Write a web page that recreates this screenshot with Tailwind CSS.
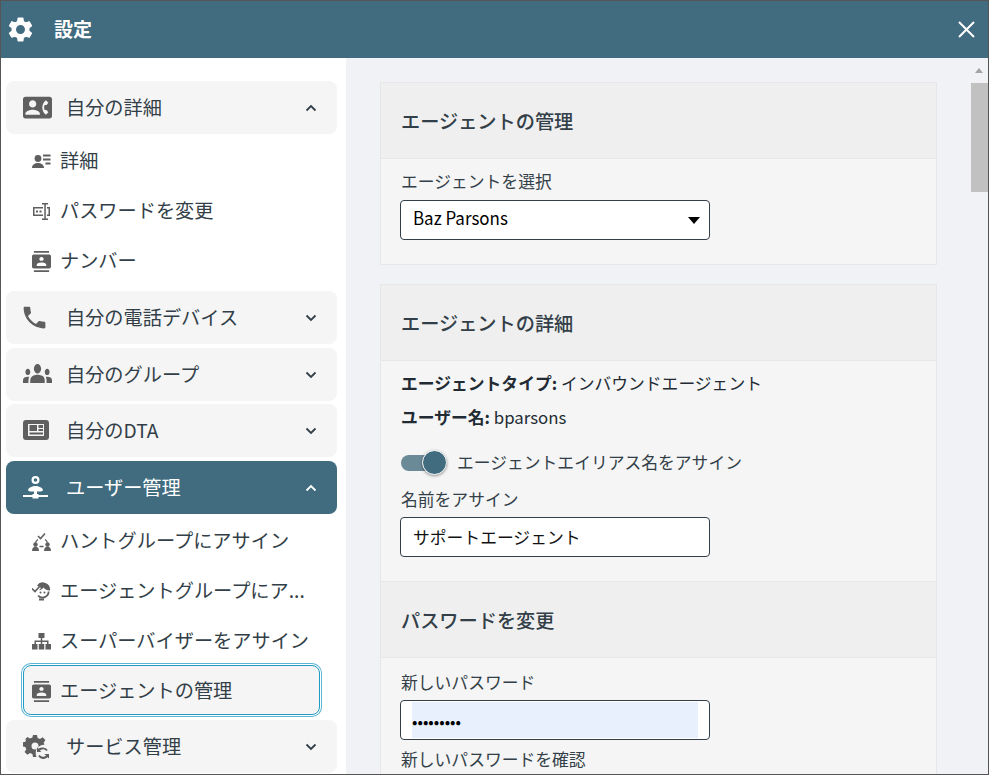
<!DOCTYPE html>
<html lang="ja">

<head>
    <meta charset="UTF-8">
    <title>設定</title>
    <script src="https://cdn.jsdelivr.net/npm/@tailwindcss/browser@4"></script>
</head>

<body class="overflow-hidden">
    <div class="w-[989px] h-[775px] border border-[#555] flex flex-col overflow-hidden bg-white font-['Noto_Sans_CJK_JP','Noto_Sans',sans-serif] text-[#333f48]">
        <!-- Header -->
        <header class="h-[57px] shrink-0 bg-[#416b7e] flex items-center justify-between pl-[7px] pr-[13px] text-white">
            <div class="flex items-center">
                <svg class="w-[25px] h-[25px]" viewBox="2.5 2 19 20" fill="#fff"><path d="M19.14 12.94c.04-.3.06-.61.06-.94 0-.32-.02-.64-.07-.94l2.03-1.58c.18-.14.23-.41.12-.61l-1.92-3.32c-.12-.22-.37-.29-.59-.22l-2.39.96c-.5-.38-1.03-.7-1.62-.94l-.36-2.54c-.04-.24-.24-.41-.48-.41h-3.84c-.24 0-.43.17-.47.41l-.36 2.54c-.59.24-1.13.57-1.62.94l-2.39-.96c-.22-.08-.47 0-.59.22L2.74 8.87c-.12.21-.08.47.12.61l2.03 1.58c-.05.3-.09.63-.09.94s.02.64.07.94l-2.03 1.58c-.18.14-.23.41-.12.61l1.92 3.32c.12.22.37.29.59.22l2.39-.96c.5.38 1.03.7 1.62.94l.36 2.54c.05.24.24.41.48.41h3.84c.24 0 .44-.17.47-.41l.36-2.54c.59-.24 1.13-.56 1.62-.94l2.39.96c.22.08.47 0 .59-.22l1.92-3.32c.12-.22.07-.47-.12-.61l-2.01-1.58zM12 15.6c-1.98 0-3.6-1.62-3.6-3.6s1.62-3.6 3.6-3.6 3.6 1.62 3.6 3.6-1.62 3.6-3.6 3.6z"/></svg>
                <span class="ml-[21px] text-[19px] font-bold">設定</span>
            </div>
            <svg class="w-[17px] h-[17px]" viewBox="0 0 17 17" stroke="#fff" stroke-width="2" fill="none"><path d="M1 1l15 15M16 1L1 16"/></svg>
        </header>

        <div class="flex flex-1 min-h-0">
            <!-- Sidebar -->
            <nav class="w-[345px] shrink-0 pl-[5px] pr-[9px] pt-[23px] flex flex-col text-[19.2px] leading-[28px]">
                <div class="h-[53px] shrink-0 rounded-lg bg-[#f5f5f5] flex items-center pl-[17px] pr-[20px]">
                    <svg class="w-[29px] h-[29px] shrink-0" viewBox="0 0 24 24" fill="#5f5f5f"><path d="M22 3H2C.9 3 0 3.9 0 5v14c0 1.1.9 2 2 2h20c1.1 0 1.99-.9 1.99-2L24 5c0-1.1-.9-2-2-2zM8 6c1.66 0 3 1.34 3 3s-1.34 3-3 3-3-1.34-3-3 1.34-3 3-3zm6 12H2v-1c0-2 4-3.1 6-3.1s6 1.1 6 3.1v1zm3.85-4h1.64L21 16l-1.99 1.99c-1.31-.98-2.28-2.38-2.73-3.99-.18-.64-.28-1.31-.28-2s.1-1.36.28-2c.45-1.62 1.42-3.01 2.73-3.99L21 8l-1.51 2h-1.64c-.22.63-.35 1.3-.35 2s.13 1.37.35 2z"/></svg>
                    <span class="ml-[14px] mb-[2px] flex-1">自分の詳細</span>
                    <svg class="w-[12px] h-[8px]" viewBox="0 0 12 8" fill="none" stroke="#333f48" stroke-width="1.8"><path d="M1.500 6.500L6 2l4.500 4.500"/></svg>
                </div>

                <div class="h-[50px] shrink-0 mt-[2px] flex items-center pl-[26px]">
                    <svg class="w-[19px] h-[19px] shrink-0" viewBox="0 0 19 19" fill="#5f5f5f"><circle cx="6" cy="6.500" r="3.400"/><path d="M0 16c0-3.500 3-5 6-5s6 1.500 6 5zM11 2.500h7.500v2H11zM11 6.500h7.500v2H11zM13.500 10.500h5v2h-5z"/></svg>
                    <span class="ml-[9px] mb-[2px]">詳細</span>
                </div>
                <div class="h-[50px] shrink-0 flex items-center pl-[26px]">
                    <svg class="w-[19px] h-[19px] shrink-0" viewBox="0 0 19 19" fill="#5f5f5f"><path d="M1 5h10v1.500H2.500v6H11V14H1zM10 1h6v1.500h-2.200v14H16V18h-6v-1.500h2.300v-14H10zM15 5h3v9h-3v-1.500h1.500v-6H15z"/><rect x="4" y="8.500" width="2" height="2"/><rect x="7.500" y="8.500" width="2" height="2"/></svg>
                    <span class="ml-[9px] mb-[2px]">パスワードを変更</span>
                </div>
                <div class="h-[50px] shrink-0 flex items-center pl-[26px]">
                    <svg class="w-[19px] h-[21px] shrink-0" viewBox="2 0 20 24" preserveAspectRatio="none" fill="#5f5f5f"><path d="M20 0H4v2h16V0zM4 24h16v-2H4v2zM20 4H4c-1.100 0-2 .9-2 2v12c0 1.100.9 2 2 2h16c1.100 0 2-.9 2-2V6c0-1.100-.9-2-2-2zm-8 2.750c1.240 0 2.250 1.010 2.250 2.250s-1.010 2.250-2.250 2.250S9.750 10.240 9.750 9 10.760 6.750 12 6.750zM17 17H7v-1.500c0-1.670 3.330-2.500 5-2.500s5 .83 5 2.500V17z"/></svg>
                    <span class="ml-[9px] mb-[2px]">ナンバー</span>
                </div>

                <div class="h-[53px] shrink-0 mt-[5px] rounded-lg bg-[#f5f5f5] flex items-center pl-[14px] pr-[20px]">
                    <svg class="w-[29px] h-[29px] shrink-0" viewBox="0 0 24 24" fill="#5f5f5f"><path d="M6.620 10.790c1.440 2.830 3.760 5.140 6.590 6.590l2.200-2.200c.27-.27.67-.36 1.020-.24 1.120.37 2.330.57 3.570.57.55 0 1 .45 1 1V20c0 .55-.45 1-1 1-9.390 0-17-7.610-17-17 0-.55.45-1 1-1h3.500c.55 0 1 .45 1 1 0 1.250.2 2.450.57 3.570.11.35.03.74-.25 1.020l-2.200 2.200z"/></svg>
                    <span class="ml-[17px] mb-[2px] flex-1">自分の電話デバイス</span>
                    <svg class="w-[12px] h-[8px]" viewBox="0 0 12 8" fill="none" stroke="#333f48" stroke-width="1.800"><path d="M1.500 1.500L6 6l4.500-4.500"/></svg>
                </div>
                <div class="h-[53px] shrink-0 mt-[4px] rounded-lg bg-[#f5f5f5] flex items-center pl-[17px] pr-[20px]">
                    <svg class="w-[29px] h-[19px] mb-[2px] shrink-0" viewBox="0 6 24 12" preserveAspectRatio="none" fill="#5f5f5f"><path d="M12 12.750c1.630 0 3.070.39 4.240.9 1.080.48 1.760 1.560 1.760 2.730V18H6v-1.610c0-1.180.68-2.260 1.760-2.730 1.170-.52 2.610-.91 4.240-.91zM4 13c1.100 0 2-.9 2-2s-.9-2-2-2-2 .9-2 2 .9 2 2 2zm1.130 1.100c-.37-.06-.74-.1-1.130-.1-.99 0-1.930.21-2.780.58C.48 14.900 0 15.620 0 16.430V18h4.500v-1.610c0-.83.23-1.610.63-2.290zM20 13c1.100 0 2-.9 2-2s-.9-2-2-2-2 .9-2 2 .9 2 2 2zm4 3.430c0-.81-.48-1.530-1.220-1.850-.85-.37-1.790-.58-2.780-.58-.39 0-.76.04-1.130.1.4.68.63 1.460.63 2.290V18H24v-1.570zM12 6c1.660 0 3 1.340 3 3s-1.340 3-3 3-3-1.340-3-3 1.340-3 3-3z"/></svg>
                    <span class="ml-[14px] mb-[2px] flex-1">自分のグループ</span>
                    <svg class="w-[12px] h-[8px]" viewBox="0 0 12 8" fill="none" stroke="#333f48" stroke-width="1.800"><path d="M1.500 1.500L6 6l4.500-4.500"/></svg>
                </div>
                <div class="h-[53px] shrink-0 mt-[3px] rounded-lg bg-[#f5f5f5] flex items-center pl-[17px] pr-[20px]">
                    <svg class="w-[26px] h-[20px] mr-[3px] mb-[2px] shrink-0" viewBox="0 0 26 20" fill="#5f5f5f"><path fill-rule="evenodd" d="M3 0h20a3 3 0 0 1 3 3v14a3 3 0 0 1-3 3H3a3 3 0 0 1-3-3V3a3 3 0 0 1 3-3zM5 4v12h16V4z"/><path d="M6.500 5h7.500v6h-7.500zM15.500 5h4.500v3h-4.500zM15.500 9h4.500v2h-4.500zM6.500 12.500h13.500v2H6.500z"/></svg>
                    <span class="ml-[14px] mb-[2px] flex-1">自分のDTA</span>
                    <svg class="w-[12px] h-[8px]" viewBox="0 0 12 8" fill="none" stroke="#333f48" stroke-width="1.800"><path d="M1.500 1.500L6 6l4.500-4.500"/></svg>
                </div>
                <div class="h-[53px] shrink-0 mt-[4px] rounded-lg bg-[#416b7e] text-white flex items-center pl-[17px] pr-[20px]">
                    <svg class="w-[25px] h-[25px] shrink-0" viewBox="0 0 25 25" fill="#fff"><path fill-rule="evenodd" d="M12.500 1a4 4 0 1 1 0 8 4 4 0 0 1 0-8zm0 2.200a1.800 1.800 0 1 0 0 3.600 1.800 1.800 0 0 0 0-3.600z"/><path d="M5 15.500c0-2.800 4.500-4.500 7.500-4.500s7.500 1.700 7.500 4.500l-2 1H7zM0 20h25v2H0zM11 16h3v4h-3zM9.500 19h6v4.500h-6z"/></svg>
                    <span class="ml-[18px] mb-[2px] flex-1">ユーザー管理</span>
                    <svg class="w-[12px] h-[8px]" viewBox="0 0 12 8" fill="none" stroke="#fff" stroke-width="1.800"><path d="M1.500 6.500L6 2l4.500 4.500"/></svg>
                </div>

                <div class="h-[50px] shrink-0 mt-[2px] flex items-center pl-[26px]">
                    <svg class="w-[19px] h-[19px] shrink-0" viewBox="0 0 19 19" fill="#5f5f5f"><path d="M6 7.500a6 6 0 0 0-2.500 3M13 7.500a6 6 0 0 1 2.500 3M7.500 14.500h4" fill="none" stroke="#5f5f5f" stroke-width="1.300"/><circle cx="3.500" cy="12.500" r="2.200"/><circle cx="15.500" cy="12.500" r="2.200"/><path d="M0 19c0-3 1.500-4.500 3.500-4.500S7 16 7 19zM12 19c0-3 1.500-4.500 3.500-4.500S19 16 19 19z"/><path d="M6 4l2.500 2.500L13 1.500" fill="none" stroke="#5f5f5f" stroke-width="1.600"/></svg>
                    <span class="ml-[9px] mb-[2px]">ハントグループにアサイン</span>
                </div>
                <div class="h-[50px] shrink-0 flex items-center pl-[26px]">
                    <svg class="w-[19px] h-[19px] shrink-0" viewBox="0 0 19 19" fill="#5f5f5f"><path d="M5 3.500A7.200 7.200 0 0 1 18 8.500c-3 0-5-1-6.500-3-1 1.500-2.500 2.500-4.500 2.800L9 6z"/><path fill-rule="evenodd" d="M17.500 9.500a7 7 0 0 1-12 4.800l1.300-1.200a5.200 5.200 0 0 0 8.900-3.600z"/><circle cx="8.500" cy="10.500" r="1"/><circle cx="12.500" cy="10.500" r="1"/><path d="M7 16.500h5v2H7z"/><path d="M0 6.500L3 9.500 7.500 4.500" fill="none" stroke="#5f5f5f" stroke-width="1.600"/></svg>
                    <span class="ml-[9px] mb-[2px] w-[248px] whitespace-nowrap">エージェントグループにア...</span>
                </div>
                <div class="h-[50px] shrink-0 flex items-center pl-[26px]">
                    <svg class="w-[19px] h-[19px] shrink-0" viewBox="0 0 19 19" fill="#5f5f5f"><path d="M6.500 1h6v5h-6zM8.750 6h1.500v3h-1.500zM2.500 8.500h14V12H15v-2H4v2H2.500zM8.750 9h1.500v3h-1.500z"/><path d="M0 12h5.500v5.500H0zM6.750 12h5.500v5.500h-5.500zM13.500 12H19v5.500h-5.500z"/></svg>
                    <span class="ml-[9px] mb-[2px]">スーパーバイザーをアサイン</span>
                </div>
                <!-- focused row -->
                <div class="h-[50px] w-[297px] ml-[17px] shrink-0 -mt-px rounded-lg bg-[#f5f5f5] border border-[#1f9bc4] ring-1 ring-offset-1 ring-[#5db4d3] flex items-center pl-[8px]">
                    <svg class="w-[19px] h-[21px] mt-[2px] shrink-0" viewBox="2 0 20 24" preserveAspectRatio="none" fill="#5f5f5f"><path d="M20 0H4v2h16V0zM4 24h16v-2H4v2zM20 4H4c-1.100 0-2 .9-2 2v12c0 1.100.9 2 2 2h16c1.100 0 2-.9 2-2V6c0-1.100-.9-2-2-2zm-8 2.750c1.240 0 2.250 1.010 2.250 2.250s-1.010 2.250-2.250 2.250S9.750 10.240 9.750 9 10.760 6.750 12 6.750zM17 17H7v-1.500c0-1.670 3.330-2.500 5-2.500s5 .83 5 2.500V17z"/></svg>
                    <span class="ml-[9px]">エージェントの管理</span>
                </div>
                <div class="h-[53px] shrink-0 mt-[5px] rounded-lg bg-[#f5f5f5] flex items-center pl-[17px] pr-[20px]">
                    <svg class="w-[26px] h-[26px] shrink-0" viewBox="0 0 26 26" fill="#5f5f5f"><path fill-rule="evenodd" d="M10 1h4l.6 3 2.400 1 2.600-1.700 2.800 2.800L20.700 8.700l.8 2.100c-4.500-.5-9 3.500-8.800 8.500 0 1.300.3 2.500.8 3.700H10l-.6-3-2.400-1-2.600 1.700-2.800-2.800 1.700-2.600-1-2.400-3-.6v-4l3-.6 1-2.400L1.600 5.700l2.800-2.800L7 4.600 9.400 3.600zM12 8.500a3.500 3.500 0 1 0 0 7 3.500 3.500 0 0 0 0-7z"/><path d="M20 13.500a5.800 5.800 0 0 1 4.800 2.600l-1.500 1a4 4 0 0 0-6.500-.3l1.700 1.200H14v-4.500l1.500 1.300a5.800 5.800 0 0 1 4.500-1.300zM26 20v4.500l-1.500-1.300a5.800 5.800 0 0 1-9.300-1.300l1.500-1a4 4 0 0 0 6.500.3L21 20z"/></svg>
                    <span class="ml-[17px] mb-[2px] flex-1">サービス管理</span>
                    <svg class="w-[12px] h-[8px]" viewBox="0 0 12 8" fill="none" stroke="#333f48" stroke-width="1.800"><path d="M1.500 1.500L6 6l4.500-4.500"/></svg>
                </div>
            </nav>

            <!-- Main -->
            <main class="relative flex-1 min-w-0 bg-[#f0f2f5] overflow-hidden pl-[34px] pt-[24px] text-[16.8px] leading-[24px]">
                <section class="w-[557px] border border-[#e7e7e7] bg-[#f5f5f5]">
                    <h2 class="h-[76px] flex items-center px-[20px] bg-[#efefef] border-b border-[#e7e7e7] text-[19.2px] font-medium">エージェントの管理</h2>
                    <div class="px-[20px] pt-[10px] pb-[24px]">
                        <label class="block">エージェントを選択</label>
                        <div class="mt-[7px] -ml-px w-[310px] h-[40px] bg-white border border-[#333f48] rounded-[4px] flex items-center justify-between pl-[12px] pr-[9px] text-black text-[18px]">
                            <span class="origin-left scale-x-[0.94] mb-[7px]">Baz Parsons</span>
                            <span class="w-0 h-0 border-x-[6px] border-x-transparent border-t-[7px] border-t-black"></span>
                        </div>
                    </div>
                </section>

                <section class="w-[557px] mt-[19px] border border-[#e7e7e7] bg-[#f5f5f5]">
                    <h2 class="h-[76px] flex items-center px-[20px] bg-[#efefef] border-b border-[#e7e7e7] text-[19.2px] font-medium">エージェントの詳細</h2>
                    <div class="px-[20px] pt-[10px] pb-[24px]">
                        <p class="text-[#222b33]"><b>エージェントタイプ:</b> インバウンドエージェント</p>
                        <p class="mt-[10px] text-[#222b33]"><b>ユーザー名:</b> bparsons</p>
                        <div class="mt-[19px] flex items-center h-[28px]">
                            <span class="relative w-[46px] h-[16px] rounded-full bg-[#6b8a98] shrink-0 mt-[1px]">
                                <span class="absolute right-0 -top-[5px] w-[25px] h-[25px] rounded-full bg-[#416b7e] border border-white shadow-[0_1px_3px_rgba(0,0,0,0.4)]"></span>
                            </span>
                            <span class="ml-[10px]">エージェントエイリアス名をアサイン</span>
                        </div>
                        <label class="block mt-[11px]">名前をアサイン</label>
                        <div class="mt-[6px] -ml-px w-[310px] h-[40px] bg-white border border-[#333f48] rounded-[4px] flex items-center pl-[12px] text-[#111]">サポートエージェント</div>
                    </div>
                    <h2 class="h-[77px] flex items-center px-[20px] bg-[#efefef] border-y border-[#e7e7e7] text-[19.2px] font-medium">パスワードを変更</h2>
                    <div class="px-[20px] pt-[12px] pb-[20px]">
                        <label class="block">新しいパスワード</label>
                        <div class="mt-[6px] -ml-px w-[310px] h-[40px] bg-white border border-[#333f48] rounded-[4px] px-[11px] py-[1px]">
                            <div class="h-full bg-[#e8f0fe] flex items-center pt-[2px] text-black text-[16px]">•••••••••</div>
                        </div>
                        <label class="block mt-[7px]">新しいパスワードを確認</label>
                    </div>
                </section>

                <!-- scrollbar -->
                <div class="absolute right-0 top-0 bottom-0 w-[17px]">
                    <span class="absolute left-[4px] top-[10px] w-0 h-0 border-x-[4px] border-x-transparent border-b-[5px] border-b-[#a3a3a3]"></span>
                    <div class="absolute left-0 right-0 top-[25px] h-[109px] bg-[#c1c1c1]"></div>
                </div>
            </main>
        </div>
    </div>
</body>

</html>
